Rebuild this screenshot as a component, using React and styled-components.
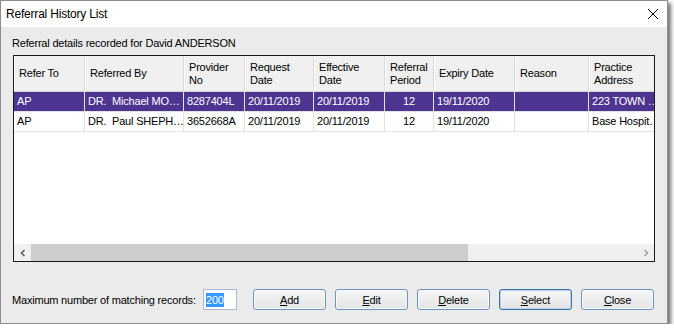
import React from "react";
import styled, { createGlobalStyle } from "styled-components";

const Global = createGlobalStyle`
  html, body { margin: 0; padding: 0; background: #ffffff; }
  body { font-family: "Liberation Sans", Arial, sans-serif; letter-spacing: -0.2px; }
`;

const Window = styled.div`
  width: 666px;
  height: 322px;
  border: 1px solid #8c8c8c;
  background: #ebebeb;
  box-shadow: 3px 3px 4px rgba(0, 0, 0, 0.55);
  display: flex;
  flex-direction: column;
  box-sizing: content-box;
`;

const TitleBar = styled.div`
  height: 26px;
  background: #ffffff;
  display: flex;
  align-items: center;
  justify-content: space-between;
  padding: 0 0 0 5px;
  font-size: 12px;
  color: #000;
`;

const CloseX = styled.div`
  width: 28px;
  height: 26px;
  display: flex;
  align-items: center;
  justify-content: center;
`;

const Client = styled.div`
  flex: 1;
  display: flex;
  flex-direction: column;
  padding: 10px 12px 0 11px;
`;

const Caption = styled.div`
  font-size: 11px;
  color: #000;
  height: 18px;
  line-height: 12px;
`;

const ListBox = styled.div`
  width: 642px;
  height: 207px;
  border: 1px solid #1a1a1a;
  background: #fff;
  display: flex;
  flex-direction: column;
  box-sizing: border-box;
  margin-left: 1px;
  overflow: hidden;
`;

const Body = styled.div`
  flex: 1;
  overflow: hidden;
`;

const Row = styled.div`
  display: flex;
  height: ${(p) => (p.$header ? 36 : 20)}px;
  background: ${(p) => (p.$header ? "#f0f0f0" : p.$selected ? "#4e3491" : "#ffffff")};
  color: ${(p) => (p.$selected ? "#ffffff" : "#000")};
  border-bottom: 1px solid ${(p) => (p.$header ? "#d6d6d6" : "#e3e3e3")};
  box-sizing: border-box;
`;

const Cell = styled.div`
  flex: 0 0 ${(p) => p.$w}px;
  width: ${(p) => p.$w}px;
  box-sizing: border-box;
  border-right: 1px solid ${(p) => (p.$header ? "#d9d9d9" : "#e3e3e3")};
  ${(p) => (p.$header ? "box-shadow: inset 1px 0 0 #ffffff;" : "")}
  padding: 0 ${(p) => (p.$header ? 5 : 3)}px;
  font-size: 11px;
  line-height: 13px;
  display: flex;
  align-items: center;
  justify-content: ${(p) => (p.$center ? "center" : "flex-start")};
  overflow: hidden;
`;

const CellText = styled.span`
  white-space: ${(p) => (p.$header ? "normal" : "pre")};
`;

const ScrollBar = styled.div`
  height: 17px;
  display: flex;
  background: #f0f0f0;
`;

const Arrow = styled.div`
  width: 17px;
  display: flex;
  align-items: center;
  justify-content: center;
  background: #f0f0f0;
`;

const Track = styled.div`
  flex: 1;
  display: flex;
`;

const Thumb = styled.div`
  width: 437px;
  background: #cdcdcd;
`;

const Footer = styled.div`
  display: flex;
  align-items: center;
  margin-top: 27px;
  height: 21px;
`;

const FooterLabel = styled.div`
  font-size: 11px;
  color: #000;
  width: 191px;
  white-space: nowrap;
`;

const Input = styled.div`
  width: 34px;
  height: 21px;
  box-sizing: border-box;
  border: 1px solid #abb9d3;
  background: #fff;
  padding: 2px 2px;
  margin-right: 16px;
  display: flex;
  align-items: center;
`;

const Sel = styled.span`
  background: #3399ff;
  color: #fff;
  font-size: 11px;
  line-height: 14px;
`;

const Buttons = styled.div`
  display: flex;
  gap: 9px;
`;

const Button = styled.div`
  width: 73px;
  height: 21px;
  box-sizing: border-box;
  border: 1px solid ${(p) => (p.$focus ? "#3a6fa8" : "#6d94be")};
  border-radius: 3px;
  background: linear-gradient(#f6f6f6, #e4e4e4);
  box-shadow: inset 0 0 0 1px ${(p) => (p.$focus ? "#b9d3ee" : "#fbfbfb")};
  font-size: 11px;
  color: #000;
  display: flex;
  align-items: center;
  justify-content: center;
`;

const U = styled.span`
  text-decoration: underline;
`;

const columns = [
  { title: "Refer To", w: 71 },
  { title: "Referred By", w: 99 },
  { title: "Provider No", w: 61 },
  { title: "Request Date", w: 69 },
  { title: "Effective Date", w: 71 },
  { title: "Referral Period", w: 49, center: true },
  { title: "Expiry Date", w: 81 },
  { title: "Reason", w: 74 },
  { title: "Practice Address", w: 66 },
];

const headerLines = {
  "Provider No": ["Provider", "No"],
  "Request Date": ["Request", "Date"],
  "Effective Date": ["Effective", "Date"],
  "Referral Period": ["Referral", "Period"],
  "Practice Address": ["Practice", "Address"],
};

const rows = [
  ["AP", "DR.  Michael MO…", "8287404L", "20/11/2019", "20/11/2019", "12", "19/11/2020", "", "223 TOWN …"],
  ["AP", "DR.  Paul SHEPH…", "3652668A", "20/11/2019", "20/11/2019", "12", "19/11/2020", "", "Base Hospit…"],
];

export default function App() {
  return (
    <>
      <Global />
      <Window>
        <TitleBar>
          <span>Referral History List</span>
          <CloseX>
            <svg width="12" height="12" viewBox="0 0 12 12">
              <path d="M1 1 L11 11 M11 1 L1 11" stroke="#000" strokeWidth="1" />
            </svg>
          </CloseX>
        </TitleBar>
        <Client>
          <Caption>Referral details recorded for David ANDERSON</Caption>
          <ListBox>
            <Row $header>
              {columns.map((c) => (
                <Cell key={c.title} $w={c.w} $header>
                  <CellText $header>
                    {headerLines[c.title] ? (
                      <>
                        {headerLines[c.title][0]}
                        <br />
                        {headerLines[c.title][1]}
                      </>
                    ) : (
                      c.title
                    )}
                  </CellText>
                </Cell>
              ))}
            </Row>
            <Body>
              {rows.map((r, i) => (
                <Row key={i} $selected={i === 0}>
                  {r.map((v, j) => (
                    <Cell key={j} $w={columns[j].w} $center={columns[j].center}>
                      <CellText>{v}</CellText>
                    </Cell>
                  ))}
                </Row>
              ))}
            </Body>
            <ScrollBar>
              <Arrow>
                <svg width="8" height="8" viewBox="0 0 8 8">
                  <path d="M5.5 1 L2.5 4 L5.5 7" stroke="#606060" strokeWidth="1.6" fill="none" />
                </svg>
              </Arrow>
              <Track>
                <Thumb />
              </Track>
              <Arrow>
                <svg width="8" height="8" viewBox="0 0 8 8">
                  <path d="M2.5 1 L5.5 4 L2.5 7" stroke="#a0a0a0" strokeWidth="1.6" fill="none" />
                </svg>
              </Arrow>
            </ScrollBar>
          </ListBox>
          <Footer>
            <FooterLabel>Maximum number of matching records:</FooterLabel>
            <Input>
              <Sel>200</Sel>
            </Input>
            <Buttons>
              <Button><span><U>A</U>dd</span></Button>
              <Button><span><U>E</U>dit</span></Button>
              <Button><span><U>D</U>elete</span></Button>
              <Button $focus><span><U>S</U>elect</span></Button>
              <Button><span><U>C</U>lose</span></Button>
            </Buttons>
          </Footer>
        </Client>
      </Window>
    </>
  );
}
